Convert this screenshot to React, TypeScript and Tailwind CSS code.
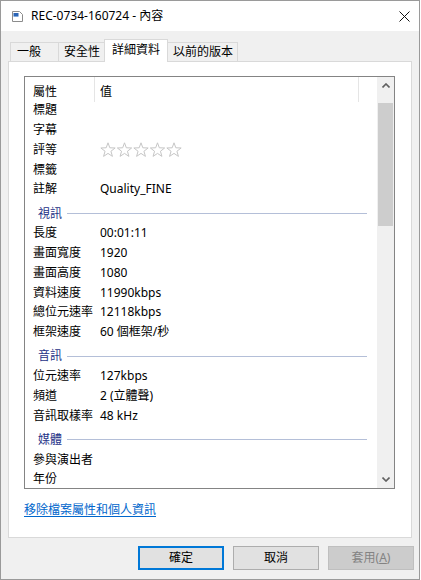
import React from "react";

// property rows shown in the details list
type Row = { kind: "row"; label: string; value?: React.ReactNode } | { kind: "group"; label: string };

function Stars() {
  const pts = "8,0.8 9.82,5.79 15.13,5.98 10.95,9.26 12.41,14.37 8,11.4 3.59,14.37 5.05,9.26 0.87,5.98 6.18,5.79";
  return (
    <svg width="84" height="16" viewBox="0 0 84 16">
      {[0, 1, 2, 3, 4].map((i) => (
        <polygon key={i} points={pts} transform={`translate(${i * 16.5} 0)`} fill="none" stroke="#c6c6c6" strokeWidth="1" strokeLinejoin="round" />
      ))}
    </svg>
  );
}

const rows: Row[] = [
  { kind: "row", label: "標題" },
  { kind: "row", label: "字幕" },
  { kind: "row", label: "評等", value: <Stars /> },
  { kind: "row", label: "標籤" },
  { kind: "row", label: "註解", value: "Quality_FINE" },
  { kind: "group", label: "視訊" },
  { kind: "row", label: "長度", value: "00:01:11" },
  { kind: "row", label: "畫面寬度", value: "1920" },
  { kind: "row", label: "畫面高度", value: "1080" },
  { kind: "row", label: "資料速度", value: "11990kbps" },
  { kind: "row", label: "總位元速率", value: "12118kbps" },
  { kind: "row", label: "框架速度", value: "60 個框架/秒" },
  { kind: "group", label: "音訊" },
  { kind: "row", label: "位元速率", value: "127kbps" },
  { kind: "row", label: "頻道", value: "2 (立體聲)" },
  { kind: "row", label: "音訊取樣率", value: "48 kHz" },
  { kind: "group", label: "媒體" },
  { kind: "row", label: "參與演出者" },
  { kind: "row", label: "年份" },
];

function ListRow({ row }: { row: Row }) {
  if (row.kind === "group") {
    return (
      <div className="pt-[4.5px] shrink-0">
        <div className="flex items-center h-[19.75px] pl-[13px] pr-[10px]">
          <span className="text-[#1e3287] leading-[16px]">{row.label}</span>
          <div className="flex-1 h-px bg-[#b4bfd8] ml-[5px]"></div>
        </div>
      </div>
    );
  }
  return (
    <div className="flex items-center h-[19.75px] shrink-0 leading-[16px]">
      <span className="w-[75px] pl-[8px] shrink-0 whitespace-nowrap">{row.label}</span>
      <span className="whitespace-nowrap flex items-center">{row.value}</span>
    </div>
  );
}

function Chevron({ up }: { up?: boolean }) {
  return (
    <svg width="8" height="5" viewBox="0 0 8 5">
      <path d={up ? "M0.5 4.5L4 1L7.5 4.5" : "M0.5 0.5L4 4L7.5 0.5"} fill="none" stroke="#606060" strokeWidth="1.6" />
    </svg>
  );
}

export default function App() {
  return (
    <div className="w-[421px] h-[580px] bg-white">
      <div className="w-[420px] h-[580px] border border-[#9a9a9a] bg-[#f0f0f0] flex flex-col text-[12px] text-black font-['Noto_Sans','Noto_Sans_CJK_TC',sans-serif]">
        {/* title bar */}
        <div className="h-[30px] bg-white flex items-center pl-[11px] pr-[9px] shrink-0">
          <svg width="11" height="11" viewBox="0 0 11 11">
            <path d="M0.5 0.5h7l3 3v7h-10z" fill="#fff" stroke="#8c8c8c" />
            <rect x="1.5" y="2" width="5" height="3" fill="#2b64b5" />
            <rect x="1.5" y="5" width="5" height="1" fill="#7fa8dc" />
          </svg>
          <span className="ml-[8px] leading-[16px]">REC-0734-160724 - 內容</span>
          <svg className="ml-auto" width="11" height="11" viewBox="0 0 11 11">
            <path d="M0.5 0.5L10.5 10.5M10.5 0.5L0.5 10.5" stroke="#111" strokeWidth="1" />
          </svg>
        </div>

        {/* tabs */}
        <div className="flex items-end h-[22px] mt-[8px] pl-[9px] shrink-0">
          <div className="w-[49px] h-[19px] border border-b-0 border-[#d9d9d9] bg-[#f0f0f0] pl-[6px] leading-[17px]">一般</div>
          <div className="w-[47px] h-[19px] -ml-px border border-b-0 border-[#d9d9d9] bg-[#f0f0f0] pl-[5px] leading-[17px]">安全性</div>
          <div className="relative z-10 w-[64px] h-[23px] -ml-px -mb-px border border-b-0 border-[#d9d9d9] bg-white pl-[7px] leading-[20px]">詳細資料</div>
          <div className="w-[71px] h-[19px] -ml-px border border-b-0 border-[#d9d9d9] bg-[#f0f0f0] pl-[5px] leading-[17px]">以前的版本</div>
        </div>

        {/* panel */}
        <div className="mx-[7px] h-[477px] border border-[#d9d9d9] bg-white pl-[15px] pt-[14px] shrink-0 flex flex-col">
          <div className="w-[371px] h-[413px] border border-[#848484] flex overflow-hidden shrink-0">
            <div className="flex-1 flex flex-col overflow-hidden">
              <div className="flex h-[23.5px] shrink-0 leading-[16px]">
                <span className="w-[69px] pl-[8px] pt-[7px] shrink-0">屬性</span>
                <div className="w-px h-[25px] bg-[#e5e5e5] shrink-0"></div>
                <span className="w-[263px] pl-[5px] pt-[7px] shrink-0">值</span>
                <div className="w-px h-[25px] bg-[#e5e5e5] shrink-0"></div>
              </div>
              {rows.map((r, i) => (
                <ListRow key={i} row={r} />
              ))}
            </div>
            {/* scrollbar */}
            <div className="w-[17px] bg-[#f0f0f0] flex flex-col shrink-0">
              <div className="h-[17px] flex items-center justify-center">
                <Chevron up />
              </div>
              <div className="h-[9px]"></div>
              <div className="h-[123px] mx-[1px] bg-[#cdcdcd]"></div>
              <div className="flex-1"></div>
              <div className="h-[17px] flex items-center justify-center">
                <Chevron />
              </div>
            </div>
          </div>
          <a className="mt-[13px] leading-[16px] text-[#0066cc] underline underline-offset-[2px] w-fit cursor-pointer">移除檔案屬性和個人資訊</a>
        </div>

        {/* buttons */}
        <div className="flex justify-end gap-[9px] pr-[5px] mt-[8px]">
          <button className="w-[86px] h-[24px] bg-[#e1e1e1] border-2 border-[#0078d7] leading-[16px]">確定</button>
          <button className="w-[86px] h-[24px] bg-[#e1e1e1] border border-[#adadad] leading-[16px]">取消</button>
          <button className="w-[86px] h-[24px] bg-[#cccccc] border border-[#bfbfbf] text-[#838383] leading-[16px]">
            套用(<span className="underline">A</span>)
          </button>
        </div>
      </div>
    </div>
  );
}
